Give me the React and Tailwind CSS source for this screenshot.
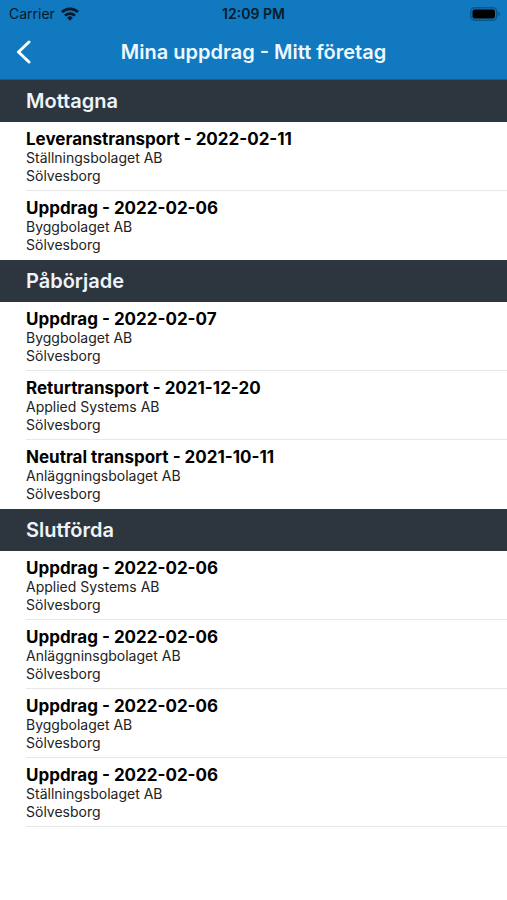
const sections = [
  {
    title: "Mottagna",
    items: [
      ["Leveranstransport - 2022-02-11", "Ställningsbolaget AB", "Sölvesborg"],
      ["Uppdrag - 2022-02-06", "Byggbolaget AB", "Sölvesborg"],
    ],
  },
  {
    title: "Påbörjade",
    items: [
      ["Uppdrag - 2022-02-07", "Byggbolaget AB", "Sölvesborg"],
      ["Returtransport - 2021-12-20", "Applied Systems AB", "Sölvesborg"],
      ["Neutral transport - 2021-10-11", "Anläggningsbolaget AB", "Sölvesborg"],
    ],
  },
  {
    title: "Slutförda",
    last: true,
    items: [
      ["Uppdrag - 2022-02-06", "Applied Systems AB", "Sölvesborg"],
      ["Uppdrag - 2022-02-06", "Anläggninsgbolaget AB", "Sölvesborg"],
      ["Uppdrag - 2022-02-06", "Byggbolaget AB", "Sölvesborg"],
      ["Uppdrag - 2022-02-06", "Ställningsbolaget AB", "Sölvesborg"],
    ],
  },
];

function WifiIcon() {
  return (
    <svg viewBox="0 0 18 14" className="h-[14px] w-[18px]" fill="none" stroke="currentColor" strokeWidth="2.7" aria-hidden="true">
      <path d="M1 5.1a11.5 11.5 0 0 1 16 0" />
      <path d="M4 8.6a7.2 7.2 0 0 1 10 0" />
      <path d="M9 13.7 6.1 10.8a4.1 4.1 0 0 1 5.8 0Z" fill="currentColor" stroke="none" />
    </svg>
  );
}

function BatteryIcon() {
  return (
    <svg viewBox="0 0 31 14" className="h-[14px] w-[31px]" aria-hidden="true">
      <rect x="0.75" y="0.75" width="26" height="12.5" rx="4" fill="none" stroke="#0b5688" strokeWidth="1.5" />
      <rect x="2.5" y="2.5" width="22.5" height="9" rx="2" fill="#000" />
      <path d="M28.3 4.8c2 .6 2 3.8 0 4.4Z" fill="#0b5688" />
    </svg>
  );
}

export default function App() {
  return (
    <div className="min-h-screen bg-white font-['Inter','Liberation_Sans',sans-serif] text-black">
      <header className="border-b border-[#1f5a82] bg-[#1079bf]">
        <div className="grid h-[27px] grid-cols-3 items-center text-[14px] text-[#04192a]">
          <div className="flex items-center gap-1.5 pl-[9px]">
            <span>Carrier</span>
            <WifiIcon />
          </div>
          <span className="text-center font-semibold">12:09 PM</span>
          <div className="flex justify-end pr-1.5"><BatteryIcon /></div>
        </div>
        <div className="grid h-[52px] grid-cols-[48px_1fr_48px] items-center pb-0.5 text-white">
          <button type="button" aria-label="Tillbaka" className="flex h-full items-center pl-4">
            <svg viewBox="0 0 15 24" className="h-6 w-[15px]" fill="none" stroke="currentColor" strokeWidth="3" strokeLinecap="round" strokeLinejoin="round" aria-hidden="true">
              <path d="M13 2 2.5 12 13 22" />
            </svg>
          </button>
          <h1 className="text-center text-[20px] font-semibold whitespace-nowrap text-[#eef8ff]">Mina uppdrag - Mitt företag</h1>
        </div>
      </header>
      <main>
        {sections.map((section) => (
          <section key={section.title}>
            <h2 className="flex h-[42px] items-center bg-[#2d363f] px-[26px] text-[20px] font-semibold text-[#eef4fa]">{section.title}</h2>
            <ul className="pl-[26px]">
              {section.items.map(([title, company, city], i) => (
                <li key={i} className={section.last ? "h-[69px] border-b border-[#e8e8e8] pt-[7px]" : "h-[69px] border-b border-[#e8e8e8] pt-[7px] last:border-transparent"}>
                  <h3 className="text-[17px] leading-5 font-bold">{title}</h3>
                  <p className="text-[14px] leading-[18px] text-[#222]">{company}</p>
                  <p className="text-[14px] leading-[18px] text-[#222]">{city}</p>
                </li>
              ))}
            </ul>
          </section>
        ))}
      </main>
    </div>
  );
}
